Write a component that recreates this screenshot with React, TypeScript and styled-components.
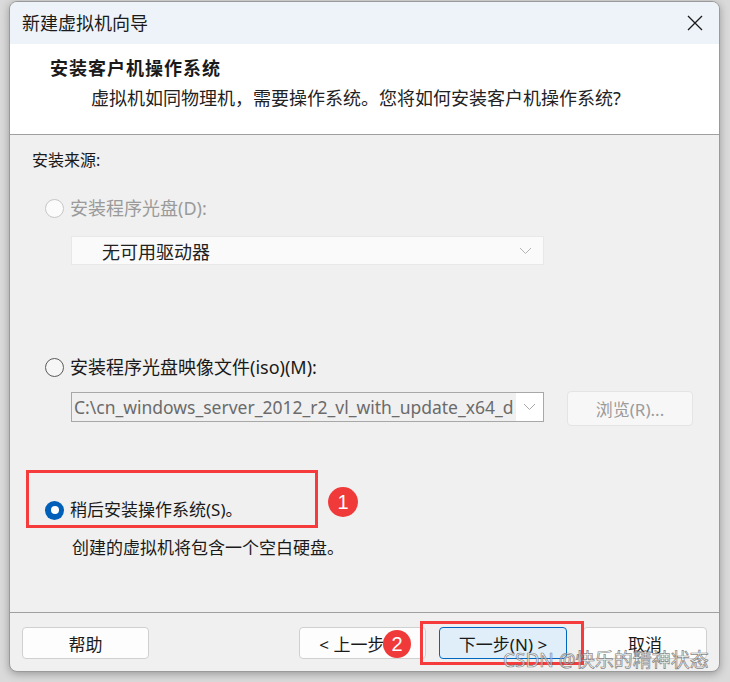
import React from 'react';
import styled, { createGlobalStyle } from 'styled-components';

const GlobalStyle = createGlobalStyle`
  html, body {
    margin: 0;
    padding: 0;
    background: #dadada;
  }
  body {
    width: 730px;
    height: 682px;
    overflow: hidden;
    font-family: "Noto Sans", "Noto Sans CJK SC", sans-serif;
    color: #1a1a1a;
  }
`;

const Page = styled.div`
  box-sizing: border-box;
  height: 682px;
  padding: 1px 0 0 9px;
`;

const Window = styled.div`
  position: relative;
  box-sizing: border-box;
  width: 711px;
  height: 671px;
  border: 1px solid #9a9a9a;
  border-radius: 8px;
  overflow: hidden;
  display: flex;
  flex-direction: column;
  background: #f0f0f0;
  box-shadow: 0 2px 9px rgba(0, 0, 0, 0.3);
`;

const TitleBar = styled.div`
  height: 42px;
  flex: none;
  display: flex;
  align-items: center;
  justify-content: space-between;
  padding: 0 16px 0 12px;
  background: #eef3f9;
  font-size: 18px;
  line-height: 24px;
`;

const CloseButton = styled.span`
  display: flex;
  width: 16px;
  height: 16px;
`;

const Header = styled.div`
  box-sizing: border-box;
  height: 91px;
  flex: none;
  padding: 12px 0 0 40px;
  background: #ffffff;
  border-bottom: 1px solid #a0a0a0;
`;

const HeaderTitle = styled.div`
  font-size: 18px;
  font-weight: 700;
  line-height: 24px;
  letter-spacing: 1px;
`;

const HeaderSub = styled.div`
  margin-top: 6px;
  padding-left: 41px;
  font-size: 18px;
  line-height: 24px;
  color: #222;
`;

const Body = styled.div`
  height: 477px;
  flex: none;
  display: flex;
  flex-direction: column;
`;

const SectionLabel = styled.div`
  margin: 13px 0 0 22px;
  font-size: 16px;
  line-height: 24px;
`;

const RadioRow = styled.label<{ $top: number; $size: number; $muted?: boolean }>`
  position: relative;
  display: flex;
  align-items: center;
  gap: 6px;
  height: 24px;
  margin-top: ${(p) => p.$top}px;
  padding-left: 35px;
  font-size: ${(p) => p.$size}px;
  line-height: 24px;
  color: ${(p) => (p.$muted ? '#9a9a9a' : '#1a1a1a')};
`;

const Radio = styled.span<{ $state: 'disabled' | 'normal' | 'checked' }>`
  position: relative;
  box-sizing: border-box;
  flex: none;
  width: 19px;
  height: 19px;
  border-radius: 50%;
  border: ${(p) =>
    p.$state === 'disabled'
      ? '1px solid #c6c6c6'
      : p.$state === 'normal'
      ? '1.5px solid #5a5a5a'
      : 'none'};
  background: ${(p) =>
    p.$state === 'disabled' ? '#fbfbfb' : p.$state === 'normal' ? '#f6f6f6' : '#005fb8'};
  &::after {
    content: '';
    display: ${(p) => (p.$state === 'checked' ? 'block' : 'none')};
    position: absolute;
    left: 5.5px;
    top: 5.5px;
    width: 8px;
    height: 8px;
    border-radius: 50%;
    background: #ffffff;
  }
`;

const DriveSelect = styled.div`
  box-sizing: border-box;
  display: flex;
  align-items: center;
  justify-content: space-between;
  width: 473px;
  height: 29px;
  margin: 16px 0 0 61px;
  padding: 0 11px 0 30px;
  background: #fafafa;
  border: 1px solid #e8e8e8;
  font-size: 18px;
  color: #222;
`;

const InputRow = styled.div`
  display: flex;
  align-items: flex-start;
  margin: 12px 0 0 61px;
`;

const PathField = styled.div`
  box-sizing: border-box;
  display: flex;
  align-items: stretch;
  width: 473px;
  height: 30px;
  margin-top: 1px;
  background: #ffffff;
  border: 1px solid #a8a8a8;
`;

const PathText = styled.div`
  width: 444px;
  flex: none;
  overflow: hidden;
  white-space: nowrap;
  padding-left: 2px;
  box-sizing: border-box;
  background: #f0f0f0;
  font-size: 17.5px;
  line-height: 28px;
  color: #6b6b6b;
`;

const ChevronSlot = styled.div`
  flex: 1;
  display: flex;
  align-items: center;
  justify-content: center;
`;

const BrowseButton = styled.div`
  box-sizing: border-box;
  display: flex;
  align-items: center;
  justify-content: center;
  width: 126px;
  height: 35px;
  margin-left: 23px;
  background: #f7f7f7;
  border: 1px solid #e4e4e4;
  border-radius: 4px;
  font-size: 17px;
  color: #9b9b9b;
`;

const Description = styled.div`
  margin: 14px 0 0 62px;
  font-size: 17px;
  line-height: 24px;
`;

const AnnotationBox = styled.div<{ $left: number; $top: number; $w: number; $h: number }>`
  position: absolute;
  box-sizing: border-box;
  left: ${(p) => p.$left}px;
  top: ${(p) => p.$top}px;
  width: ${(p) => p.$w}px;
  height: ${(p) => p.$h}px;
  border: 3px solid #f53b3b;
  pointer-events: none;
`;

const Badge = styled.div<{ $left: number; $top: number; $d: number }>`
  position: absolute;
  left: ${(p) => p.$left}px;
  top: ${(p) => p.$top}px;
  width: ${(p) => p.$d}px;
  height: ${(p) => p.$d}px;
  border-radius: 50%;
  background: #f03a3a;
  color: #ffffff;
  display: flex;
  align-items: center;
  justify-content: center;
  font-family: "Liberation Sans", Arial, sans-serif;
  font-size: 20px;
  line-height: 1;
`;

const Footer = styled.div`
  position: relative;
  flex: 1;
  display: flex;
  align-items: flex-start;
  padding: 14px 12px 0 12px;
  border-top: 1px solid #a0a0a0;
`;

const Button = styled.div<{ $w: number; $gap?: number; $primary?: boolean }>`
  box-sizing: border-box;
  display: flex;
  align-items: center;
  justify-content: center;
  width: ${(p) => p.$w}px;
  height: 32px;
  margin-left: ${(p) => p.$gap ?? 0}px;
  background: ${(p) => (p.$primary ? '#e0eef9' : '#fdfdfd')};
  border: 1px solid ${(p) => (p.$primary ? '#0067c0' : '#d0d0d0')};
  border-radius: 4px;
  font-size: 17px;
  color: #1a1a1a;
  white-space: pre;
`;

const Spacer = styled.div`
  flex: 1;
`;

const Watermark = styled.div`
  position: absolute;
  left: 493px;
  top: 38px;
  font-size: 19px;
  line-height: 19px;
  color: rgba(255, 255, 255, 0.6);
  -webkit-text-stroke: 0.7px rgba(100, 100, 100, 0.8);
  white-space: nowrap;
  pointer-events: none;
`;

const Chevron = ({ color }: { color: string }) => (
  <svg width="13" height="8" viewBox="0 0 13 8">
    <polyline points="1,1 6.5,6.5 12,1" fill="none" stroke={color} strokeWidth="1" />
  </svg>
);

export default function App() {
  return (
    <>
      <GlobalStyle />
      <Page>
        <Window>
          <TitleBar>
            <span>新建虚拟机向导</span>
            <CloseButton>
              <svg width="16" height="16" viewBox="0 0 16 16">
                <path d="M1 1 L15 15 M15 1 L1 15" stroke="#1a1a1a" strokeWidth="1.3" />
              </svg>
            </CloseButton>
          </TitleBar>
          <Header>
            <HeaderTitle>安装客户机操作系统</HeaderTitle>
            <HeaderSub>虚拟机如同物理机，需要操作系统。您将如何安装客户机操作系统?</HeaderSub>
          </Header>
          <Body>
            <SectionLabel>安装来源:</SectionLabel>
            <RadioRow $top={24} $size={18} $muted>
              <Radio $state="disabled" />
              安装程序光盘(D):
            </RadioRow>
            <DriveSelect>
              <span>无可用驱动器</span>
              <Chevron color="#b3b3b3" />
            </DriveSelect>
            <RadioRow $top={90} $size={18}>
              <Radio $state="normal" />
              安装程序光盘映像文件(iso)(M):
            </RadioRow>
            <InputRow>
              <PathField>
                <PathText>C:\cn_windows_server_2012_r2_vl_with_update_x64_d</PathText>
                <ChevronSlot>
                  <Chevron color="#a8a8a8" />
                </ChevronSlot>
              </PathField>
              <BrowseButton>浏览(R)...</BrowseButton>
            </InputRow>
            <RadioRow $top={72} $size={17}>
              <Radio $state="checked" />
              稍后安装操作系统(S)。
              <AnnotationBox $left={16} $top={-28} $w={292} $h={58} />
              <Badge $left={318} $top={-11} $d={30}>1</Badge>
            </RadioRow>
            <Description>创建的虚拟机将包含一个空白硬盘。</Description>
          </Body>
          <Footer>
            <Button $w={127}>帮助</Button>
            <Spacer />
            <Button $w={127}>{'< 上一步(B)'}</Button>
            <Button $w={128} $gap={13} $primary>
              {'下一步(N) >'}
            </Button>
            <Button $w={124} $gap={16}>取消</Button>
            <AnnotationBox $left={410} $top={8} $w={164} $h={44} />
            <Badge $left={373} $top={17} $d={28}>2</Badge>
            <Watermark>CSDN @快乐的精神状态</Watermark>
          </Footer>
        </Window>
      </Page>
    </>
  );
}
